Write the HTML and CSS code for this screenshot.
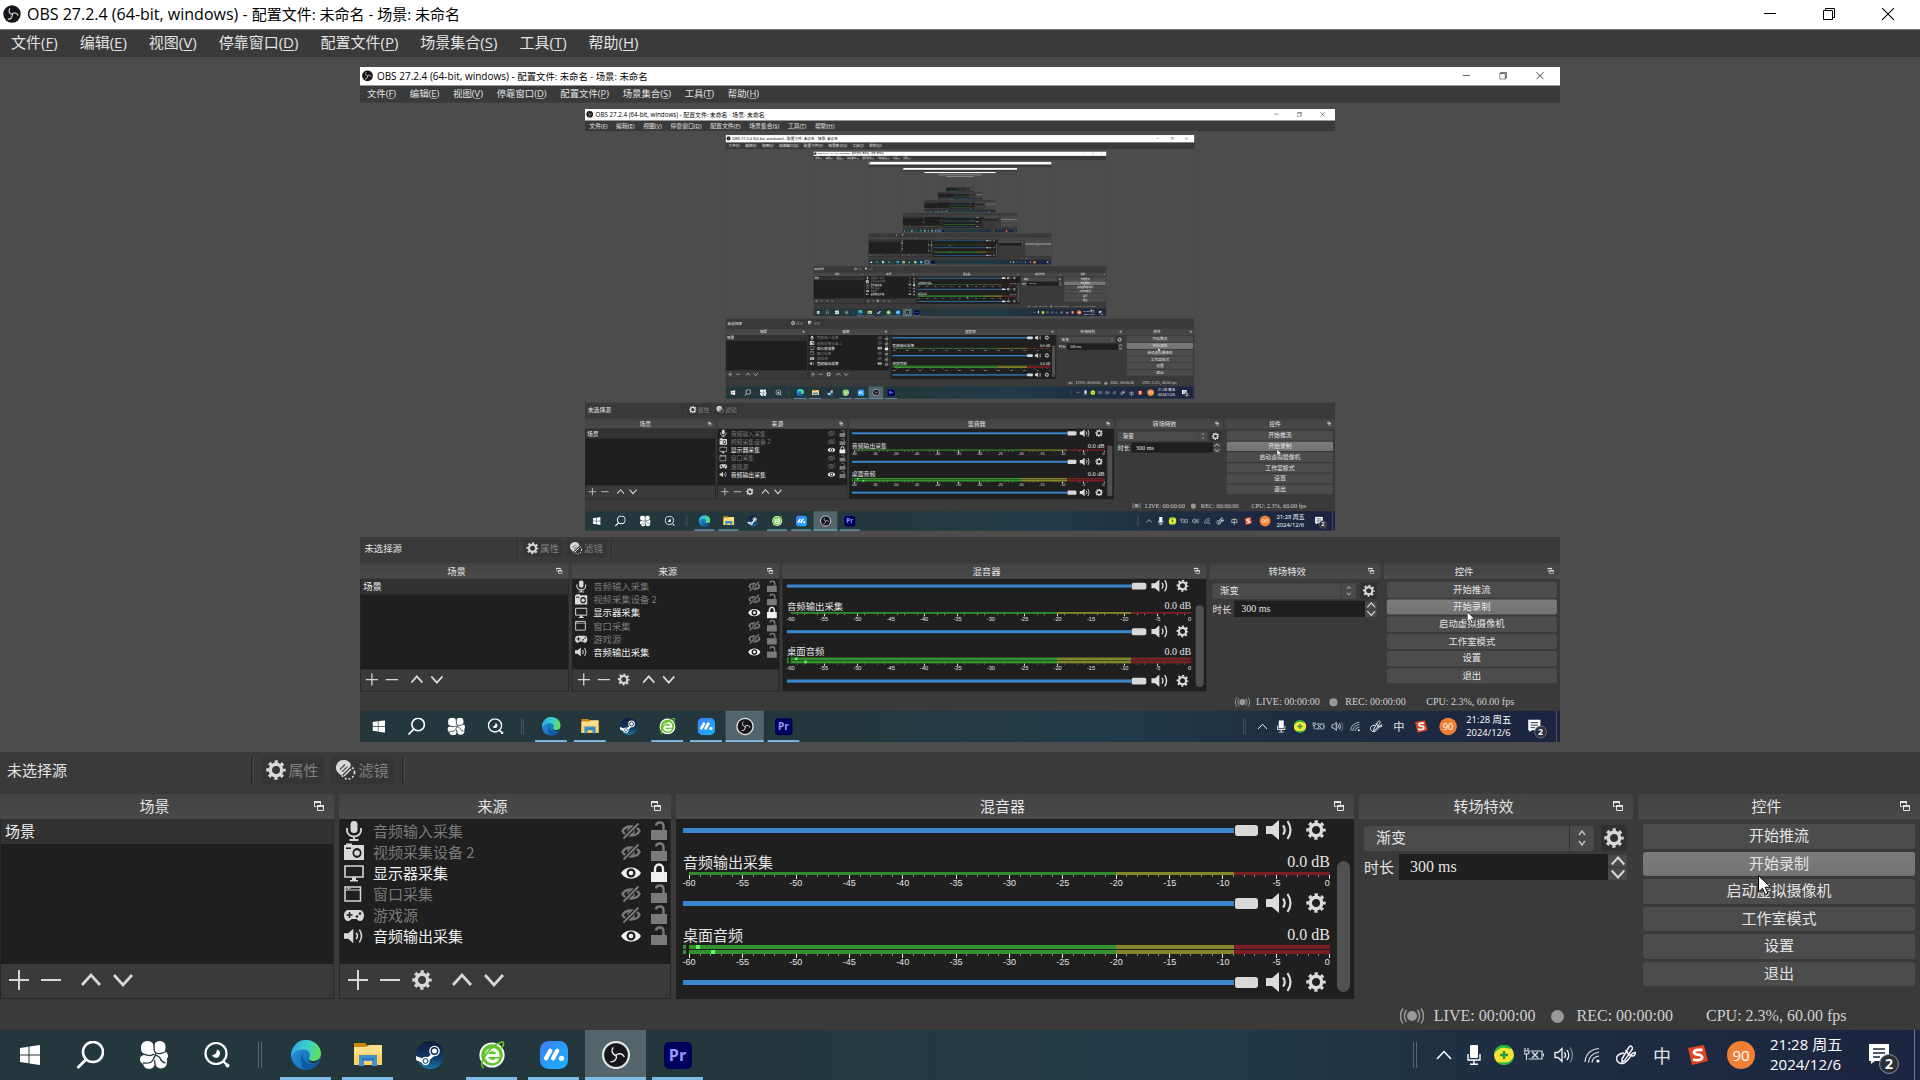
FILE: index.html
```html
<!DOCTYPE html>
<html lang="zh-CN">
<head>
<meta charset="utf-8">
<title>OBS 27.2.4 (64-bit, windows) - 配置文件: 未命名 - 场景: 未命名</title>
<link rel="stylesheet" href="styles.css">
</head>
<body>
<svg class="defs" aria-hidden="true">
  <defs>
    <linearGradient id="edge-top" x1="0" y1="0.2" x2="1" y2="0.4"><stop offset="0" stop-color="#2fa8e0"/><stop offset="0.55" stop-color="#37d0c8"/><stop offset="1" stop-color="#5fe05a"/></linearGradient>
    <linearGradient id="edge-low" x1="0" y1="0" x2="1" y2="1"><stop offset="0" stop-color="#2b9be6"/><stop offset="1" stop-color="#0f5ba8"/></linearGradient>
    <linearGradient id="steam-bg" x1="0" y1="0" x2="0" y2="1"><stop offset="0" stop-color="#101a3c"/><stop offset="0.6" stop-color="#123a63"/><stop offset="1" stop-color="#1878a8"/></linearGradient>
    <linearGradient id="m-bg" x1="0" y1="0" x2="1" y2="1"><stop offset="0" stop-color="#3d7df5"/><stop offset="1" stop-color="#19b4ff"/></linearGradient>
  </defs>
  <symbol id="i-obs" viewBox="0 0 30 30"><circle cx="15" cy="15" r="14.500" fill="#17151a"/><g fill="none" stroke="#e8e8e8" stroke-width="1.800"><path d="M15 16C10.500 14.500 8.500 9.500 11.500 5.500"/><path d="M15 16C10.500 14.500 8.500 9.500 11.500 5.500" transform="rotate(120 15 15.500)"/><path d="M15 16C10.500 14.500 8.500 9.500 11.500 5.500" transform="rotate(240 15 15.500)"/></g></symbol>
  <symbol id="i-gear" viewBox="0 0 20 20"><g fill="none" stroke="currentColor"><circle cx="10" cy="10" r="5.700" stroke-width="3.400"/><circle cx="10" cy="10" r="8.200" stroke-width="3" stroke-dasharray="3.220 3.220" stroke-dashoffset="1.610"/></g></symbol>
  <symbol id="i-filter" viewBox="0 0 20 20"><path fill="currentColor" d="M7.500 0a7.500 7.500 0 0 0-6 12l3 3L15 5A7.500 7.500 0 0 0 7.500 0Z"/><path stroke="#3a3a3a" stroke-width="1.200" d="M4 9.500l5-5M5.500 12.500l6-6"/><path stroke="currentColor" stroke-width="1.600" d="M5 15l9-9M8 16l7-7"/><circle cx="12" cy="12.500" r="6.500" fill="none" stroke="currentColor" stroke-width="1.800" stroke-dasharray="1.800 2"/></symbol>
  <symbol id="i-float" viewBox="0 0 10 10"><g fill="none" stroke="currentColor"><path d="M.5 5.500v-5h6v3M.5 5.500h2"/><path d="M3.500 4.500h6v5h-6z"/><path d="M0 1h7M3 5h7" stroke-width="2"/></g></symbol>
  <symbol id="i-plus" viewBox="0 0 20 20"><path d="M10 0v20M0 10h20" stroke="currentColor" stroke-width="2"/></symbol>
  <symbol id="i-minus" viewBox="0 0 20 20"><path d="M0 10h20" stroke="currentColor" stroke-width="2"/></symbol>
  <symbol id="i-up" viewBox="0 0 20 20"><path d="M1 15l9-10 9 10" fill="none" stroke="currentColor" stroke-width="2.800"/></symbol>
  <symbol id="i-down" viewBox="0 0 20 20"><path d="M1 5l9 10 9-10" fill="none" stroke="currentColor" stroke-width="2.800"/></symbol>
  <symbol id="i-mic" viewBox="0 0 20 20"><rect x="6.500" y="0" width="7" height="12" rx="3.500" fill="currentColor"/><path d="M3 7v2.500a7 6 0 0 0 14 0V7M10 15.500V19M5.500 19h9" fill="none" stroke="currentColor" stroke-width="1.800"/></symbol>
  <symbol id="i-camera" viewBox="0 0 20 20"><path fill="currentColor" fill-rule="evenodd" d="M1 3h1V1.500h6V3h12v15H0V3zM13 6a4.500 5 0 1 0 0 10 4.500 5 0 0 0 0-10zM2 5.500v1.500h5V5.500z"/><circle cx="13" cy="11" r="2.800" fill="currentColor"/></symbol>
  <symbol id="i-monitor" viewBox="0 0 20 20"><path d="M1 3h18v11H1z" fill="none" stroke="currentColor" stroke-width="1.600"/><path d="M8 14h4v3h2v1.500H6V17h2z" fill="currentColor"/></symbol>
  <symbol id="i-window" viewBox="0 0 20 20"><path d="M1 3h15.500v14H1z" fill="none" stroke="currentColor" stroke-width="1.500"/><path d="M1 6h15.500" stroke="currentColor"/><path d="M2.500 4.500h4" stroke="currentColor" stroke-dasharray="1 .5"/></symbol>
  <symbol id="i-game" viewBox="0 0 20 20"><path fill="currentColor" d="M5 5h10c3 0 5 2 5 5.500S18 16 16 16s-3-2-4-2H8c-1 0-2 2-4 2s-4-2-4-5.500S2 5 5 5z"/><path d="M5.500 7v6M2.500 10h6" stroke="#1f1f1f" stroke-width="1.600"/><circle cx="13" cy="11.500" r="1.300" fill="#1f1f1f"/><circle cx="16" cy="8.500" r="1.300" fill="#1f1f1f"/></symbol>
  <symbol id="i-sound" viewBox="0 0 28 20"><path fill="currentColor" d="M0 6h6l7-6v20l-7-6H0z"/><path d="M17 5.500q3.500 4.500 0 9M21.500 1q6 9 0 18" fill="none" stroke="currentColor" stroke-width="2.200"/></symbol>
  <symbol id="i-eye" viewBox="0 0 20 20"><path fill="currentColor" fill-rule="evenodd" d="M0 10C4 2.500 16 2.500 20 10 16 17.500 4 17.500 0 10zM10 5.500a4.500 4.500 0 1 0 0 9 4.500 4.500 0 0 0 0-9z"/><circle cx="10" cy="10" r="2.300" fill="currentColor"/></symbol>
  <symbol id="i-hidden" viewBox="0 0 20 20"><path fill="none" stroke="currentColor" stroke-width="2.400" d="M1.500 10c3-6 14-6 17 0-3 6-14 6-17 0z"/><circle cx="10" cy="10" r="3" fill="none" stroke="currentColor" stroke-width="1.600"/><path d="M2 18L18 2" stroke="#1f1f1f" stroke-width="4"/><path d="M2.500 17.500L17.500 2.500" stroke="currentColor" stroke-width="2"/></symbol>
  <symbol id="i-lock" viewBox="0 0 16 20"><path d="M0 9h16v10H0z" fill="currentColor"/><path d="M4 9V6a4 4.500 0 0 1 8 0v3" fill="none" stroke="currentColor" stroke-width="2.400"/></symbol>
  <symbol id="i-unlock" viewBox="0 0 16 20"><path d="M0 9h16v10H0z" fill="currentColor"/><path d="M5 4.500C5.500.500 12.500.500 12.500 5v4" fill="none" stroke="currentColor" stroke-width="2.400"/></symbol>
  <symbol id="i-live" viewBox="0 0 24 16"><circle cx="12" cy="8" r="5" fill="currentColor"/><path d="M6.500 2q-4 6 0 12M17.500 2q4 6 0 12M3 .500q-5 7.500 0 15M21 .500q5 7.500 0 15" fill="none" stroke="currentColor" stroke-width="1.500"/></symbol>
  <symbol id="i-updown" viewBox="0 0 8 16"><path d="M1 5l3-4 3 4M1 11l3 4 3-4" fill="none" stroke="currentColor" stroke-width="1.500"/></symbol>

  <symbol id="i-win" viewBox="0 0 20 20"><path fill="#fff" d="M0 3l8.500-1.200V9.500H0zM9.500 1.600L20 0v9.500H9.500zM0 10.500h8.500v7.700L0 17zM9.500 10.500H20V20L9.500 18.400z"/></symbol>
  <symbol id="i-search" viewBox="0 0 28 28"><circle cx="17" cy="11" r="10" fill="none" stroke="#fff" stroke-width="2.600"/><path d="M10 18.500L1.500 27" stroke="#fff" stroke-width="2.800"/></symbol>
  <symbol id="i-pinwheel" viewBox="0 0 28 28"><g fill="#fff"><rect x="1" y="0" width="13" height="14" rx="6"/><rect x="14" y="0" width="11.500" height="13" rx="5.500"/><rect x="15" y="10" width="13" height="10" rx="5"/><rect x="0" y="14" width="14" height="9" rx="4.500"/><rect x="3" y="15" width="12" height="13" rx="6"/><rect x="15" y="14" width="12" height="13.500" rx="6"/><circle cx="14" cy="14" r="5"/></g><path fill="none" stroke="#24373d" stroke-width="1.300" d="M14 .5v6q0 4.500 2 5.500 4 2 11-2M1 12q9 4.500 13 1M3 22q8 1 10-3t3-7M14.500 27.500q1.500-4 0-8M14.500 14q5 1 6 4t5 4"/></symbol>
  <symbol id="i-lens" viewBox="0 0 26 26"><circle cx="12" cy="11.500" r="10.500" fill="none" stroke="#fff" stroke-width="2.200"/><path d="M19 19l4 4" stroke="#fff" stroke-width="2.400"/><circle cx="23.500" cy="23.500" r="2" fill="#fff"/><path d="M13 7.500a4.200 4.200 0 1 1-5 5.500q4.500 0 5-5.500z" fill="#fff"/></symbol>
  <symbol id="i-edge" viewBox="0 0 30 30"><circle cx="15" cy="15" r="15" fill="url(#edge-low)"/><path fill="url(#edge-top)" d="M1 11C4 3 9 0 15 0c9 0 15 6.500 15 13.500 0 5-4 7.500-7.500 7.500-4 0-5.500-1.500-4-4 1.500-4-1-7.500-6-7.500C7 9.500 3 12 .2 16.500Q0 13 1 11z"/><path fill="#0c59a4" d="M10 19c0-4 2-7.500 4.500-8C10 12 10.500 22 19 24c4 .8 7-.5 8.500-1.500C25 27 20 30 15 30c-3-1-5-6-5-11z"/><path fill="#24373d" d="M18.500 17c-1.500 2.500 0 4 4 4q3.500 0 6.200-2.500-.5 3-3.200 4.500c-5 1.500-10-2-7-6z"/></symbol>
  <symbol id="i-folder" viewBox="0 0 28 26"><path fill="#c88a10" d="M0 1h11l3 3h14v6H0z"/><path fill="#ffe08a" d="M0 5h12l3-2h13v20H0z"/><path fill="#ffd35c" d="M0 12h28v11H0z"/><path fill="#3f92d2" d="M5 13h18v11h-5v-5h-8v5H5z"/><path fill="#2f78b8" d="M8 16h12v2H8z"/></symbol>
  <symbol id="i-steam" viewBox="0 0 28 28"><circle cx="14" cy="14" r="14" fill="url(#steam-bg)"/><path fill="#fff" d="M0 15l9 3.500 6-5v-4l5 4-6.500 5.500-3.500 4.500L0 19z"/><circle cx="9.500" cy="20" r="4.200" fill="#fff"/><circle cx="9.500" cy="20" r="2.400" fill="none" stroke="#123a63" stroke-width="1"/><circle cx="18.500" cy="10" r="5.300" fill="#fff"/><circle cx="18.500" cy="10" r="3.200" fill="#fff" stroke="#12284c" stroke-width="1.400"/></symbol>
  <symbol id="i-browser" viewBox="0 0 28 30"><circle cx="14" cy="15" r="13.500" fill="#fff"/><circle cx="14" cy="15" r="11.500" fill="#62c62a"/><path d="M8 15.500h12.500c0-8-12-8.500-12.500 0 0 7 9 8.500 12 3.500" fill="none" stroke="#fff" stroke-width="3.400"/><path d="M5 29C-2 24 12 5 24 1q5 0 0 7" fill="none" stroke="#5cc127" stroke-width="1.800"/></symbol>
  <symbol id="i-m" viewBox="0 0 30 30"><rect width="30" height="30" rx="9" fill="url(#m-bg)"/><path d="M6.500 18.500l4.500-8M14 18.500l4.500-8" stroke="#fff" stroke-width="4.600" stroke-linecap="round"/><circle cx="23" cy="18.500" r="2.800" fill="#fff"/></symbol>
  <symbol id="i-shield" viewBox="0 0 20 20"><circle cx="10" cy="10" r="10" fill="#f6e332"/><path d="M0 9A10 10 0 0 1 18 4q-5-1-8-1.500Q4 2.500 0 9zM20 11A10 10 0 0 1 3 17q5 .5 9 .5 5-.5 8-6.500z" fill="#23b14a"/><path d="M10 6v8M6 10h8" stroke="#2a9a3d" stroke-width="2.400"/></symbol>
  <symbol id="i-power" viewBox="0 0 20 14"><g fill="none" stroke="#d5dbe0" stroke-width="1.200"><path d="M6.500 3H18v8H4.500"/><path d="M19.500 5.500v3M1 0v2.500M4 0v2.500M0 3h5v1.500Q5 6 2.500 6 0 6 0 4.500zM2.500 6v6"/><path d="M8 4l6 6M14 4l-6 6" stroke-width="1.500"/></g></symbol>
  <symbol id="i-volume" viewBox="0 0 20 18"><g fill="none" stroke="#f2f4f5" stroke-width="1.300"><path d="M1 6.500h3l4-4v13l-4-4H1z"/><path d="M10.500 6q2 3 0 6M13 4q3.500 5 0 10"/><path d="M16 1.500q5 7.500 0 15" stroke="#7d8797"/></g></symbol>
  <symbol id="i-wifi" viewBox="0 0 16 16"><g fill="none" stroke="#dfe4ea" stroke-width="1.200"><path d="M1 15Q2 3 15 1.500M4.500 15.500Q5 7 15 5M8 15.500q.5-5.500 7-6.500"/></g><circle cx="14" cy="14" r="1.600" fill="#fff"/></symbol>
  <symbol id="i-pen" viewBox="0 0 20 20"><g fill="none" stroke="#f2f4f5" stroke-width="1.500"><path d="M6 14L13 2q2-2 3 0 1 1 0 2.500L9 15l-3 2z"/><path d="M8 8q-8 1-7.500 6.500Q3 20 8 18q5-3 7-8 2-3 4.500-2.500-.5 4-4 3.500-3-1-6-6"/></g></symbol>
  <symbol id="i-traymic" viewBox="0 0 14 20"><rect x="3" width="8" height="13" rx="1" fill="#fff"/><path d="M1 9v6h12V9M7 15v4M3 19.300h8" fill="none" stroke="#fff" stroke-width="1.400"/></symbol>
  <symbol id="i-sogou" viewBox="0 0 20 20"><path fill="#dd4422" d="M0 3l16-3 4 16-16 4z"/><path d="M14.500 5Q6 4 6 7.500q.5 2 4 2.200 5 .5 4 3.800-2 2.500-9 1" fill="none" stroke="#fff" stroke-width="2.800"/></symbol>
  <symbol id="i-chevron" viewBox="0 0 16 10"><path d="M1 9l7-7.500L15 9" fill="none" stroke="#fff" stroke-width="1.500"/></symbol>
  <symbol id="i-note" viewBox="0 0 20 20"><path fill="#fff" d="M0 0h20v17H6l-4 3v-3H0z"/><path d="M4 5h12M4 9h12M4 13h7" stroke="#1e2942" stroke-width="1.500"/></symbol>
  <symbol id="i-min" viewBox="0 0 12 12"><path d="M0 5.500h12" stroke="#000"/></symbol>
  <symbol id="i-restore" viewBox="0 0 12 12"><path d="M.5 2.500h9v9h-9zM2.500 2.500v-2h9v9h-2" fill="none" stroke="#000"/></symbol>
  <symbol id="i-close" viewBox="0 0 12 12"><path d="M0 0l12 12M12 0L0 12" stroke="#000" stroke-width="1.100"/></symbol>
  <symbol id="i-cursor" viewBox="0 0 13 21"><path d="M.5.500v16.500l4-3.800 2.600 6.300 2.800-1.200-2.700-6.100h5.300z" fill="#fff" stroke="#000"/></symbol>
</svg>

<div class="desktop" id="desktop">
  <header class="titlebar">
    <svg class="titlebar-logo"><use href="#i-obs"/></svg>
    <span class="titlebar-text"><span class="app-name">OBS 27.2.4 (64-bit, windows) - </span>配置文件: 未命名 - 场景: 未命名</span>
    <div class="window-buttons">
      <button aria-label="最小化"><svg><use href="#i-min"/></svg></button>
      <button aria-label="还原"><svg><use href="#i-restore"/></svg></button>
      <button aria-label="关闭"><svg><use href="#i-close"/></svg></button>
    </div>
  </header>

  <nav class="menubar">
    <button>文件(<u>F</u>)</button><button>编辑(<u>E</u>)</button><button>视图(<u>V</u>)</button><button>停靠窗口(<u>D</u>)</button><button>配置文件(<u>P</u>)</button><button>场景集合(<u>S</u>)</button><button>工具(<u>T</u>)</button><button>帮助(<u>H</u>)</button>
  </nav>

  <main class="preview"><div class="capture"></div></main>

  <div class="source-toolbar">
    <span class="source-toolbar-name">未选择源</span>
    <i class="divider"></i>
    <button><svg><use href="#i-gear"/></svg>属性</button>
    <button><svg><use href="#i-filter"/></svg>滤镜</button>
    <i class="divider"></i>
  </div>

  <div class="docks">
    <section class="dock">
      <h2>场景<button class="float" aria-label="浮动"><svg><use href="#i-float"/></svg></button></h2>
      <div class="list-box">
        <ul class="scene-list"><li>场景</li></ul>
        <div class="list-tools">
          <button aria-label="添加"><svg><use href="#i-plus"/></svg></button>
          <button aria-label="移除"><svg><use href="#i-minus"/></svg></button>
          <button class="apart" aria-label="上移"><svg><use href="#i-up"/></svg></button>
          <button aria-label="下移"><svg><use href="#i-down"/></svg></button>
        </div>
      </div>
    </section>

    <section class="dock">
      <h2>来源<button class="float" aria-label="浮动"><svg><use href="#i-float"/></svg></button></h2>
      <div class="list-box">
        <ul class="source-list">
          <li class="off"><svg><use href="#i-mic"/></svg><span>音频输入采集</span><button aria-label="可见"><svg><use href="#i-hidden"/></svg></button><button aria-label="锁定"><svg class="lock"><use href="#i-unlock"/></svg></button></li>
          <li class="off"><svg><use href="#i-camera"/></svg><span>视频采集设备 2</span><button aria-label="可见"><svg><use href="#i-hidden"/></svg></button><button aria-label="锁定"><svg class="lock"><use href="#i-unlock"/></svg></button></li>
          <li><svg><use href="#i-monitor"/></svg><span>显示器采集</span><button aria-label="可见"><svg><use href="#i-eye"/></svg></button><button aria-label="锁定"><svg class="lock"><use href="#i-lock"/></svg></button></li>
          <li class="off"><svg><use href="#i-window"/></svg><span>窗口采集</span><button aria-label="可见"><svg><use href="#i-hidden"/></svg></button><button aria-label="锁定"><svg class="lock"><use href="#i-unlock"/></svg></button></li>
          <li class="off"><svg><use href="#i-game"/></svg><span>游戏源</span><button aria-label="可见"><svg><use href="#i-hidden"/></svg></button><button aria-label="锁定"><svg class="lock"><use href="#i-unlock"/></svg></button></li>
          <li><svg><use href="#i-sound"/></svg><span>音频输出采集</span><button aria-label="可见"><svg><use href="#i-eye"/></svg></button><button class="dim" aria-label="锁定"><svg class="lock"><use href="#i-unlock"/></svg></button></li>
        </ul>
        <div class="list-tools">
          <button aria-label="添加"><svg><use href="#i-plus"/></svg></button>
          <button aria-label="移除"><svg><use href="#i-minus"/></svg></button>
          <button aria-label="属性"><svg><use href="#i-gear"/></svg></button>
          <button class="apart" aria-label="上移"><svg><use href="#i-up"/></svg></button>
          <button aria-label="下移"><svg><use href="#i-down"/></svg></button>
        </div>
      </div>
    </section>

    <section class="dock">
      <h2>混音器<button class="float" aria-label="浮动"><svg><use href="#i-float"/></svg></button></h2>
      <div class="mixer">
        <div class="channels">
          <div class="volume"><input type="range" aria-label="音量" value="100"><button aria-label="静音"><svg class="speaker"><use href="#i-sound"/></svg></button><button aria-label="设置"><svg><use href="#i-gear"/></svg></button></div>
          <div class="channel-name"><span>音频输出采集</span><span class="num">0.0 dB</span></div>
          <div class="meter"><div class="bar"></div></div>
          <div class="ticks"></div>
          <div class="scale"><span>-60</span><span>-55</span><span>-50</span><span>-45</span><span>-40</span><span>-35</span><span>-30</span><span>-25</span><span>-20</span><span>-15</span><span>-10</span><span>-5</span><span>0</span></div>
          <div class="volume"><input type="range" aria-label="音量" value="100"><button aria-label="静音"><svg class="speaker"><use href="#i-sound"/></svg></button><button aria-label="设置"><svg><use href="#i-gear"/></svg></button></div>
          <div class="channel-name"><span>桌面音频</span><span class="num">0.0 dB</span></div>
          <div class="meter stereo"><div class="bar"></div><div class="bar right"></div></div>
          <div class="ticks"></div>
          <div class="scale"><span>-60</span><span>-55</span><span>-50</span><span>-45</span><span>-40</span><span>-35</span><span>-30</span><span>-25</span><span>-20</span><span>-15</span><span>-10</span><span>-5</span><span>0</span></div>
          <div class="volume"><input type="range" aria-label="音量" value="100"><button aria-label="静音"><svg class="speaker"><use href="#i-sound"/></svg></button><button aria-label="设置"><svg><use href="#i-gear"/></svg></button></div>
        </div>
        <div class="scrollbar"></div>
      </div>
    </section>

    <section class="dock">
      <h2>转场特效<button class="float" aria-label="浮动"><svg><use href="#i-float"/></svg></button></h2>
      <div class="transition">
        <div class="transition-row">
          <div class="combo"><select aria-label="转场特效"><option>渐变</option></select><svg><use href="#i-updown"/></svg></div>
          <button class="gear-button" aria-label="转场属性"><svg><use href="#i-gear"/></svg></button>
        </div>
        <div class="transition-row">
          <label class="duration">时长<input class="num" type="text" value="300 ms"></label>
          <div class="spin"><button aria-label="增加"><svg><use href="#i-up"/></svg></button><button aria-label="减少"><svg><use href="#i-down"/></svg></button></div>
        </div>
      </div>
    </section>

    <section class="dock controls-dock">
      <h2>控件<button class="float" aria-label="浮动"><svg><use href="#i-float"/></svg></button></h2>
      <div class="controls">
        <button>开始推流</button><button class="hover">开始录制</button><button>启动虚拟摄像机</button><button>工作室模式</button><button>设置</button><button>退出</button>
      </div>
      <svg class="cursor"><use href="#i-cursor"/></svg>
    </section>
  </div>

  <footer class="statusbar num">
    <svg class="live"><use href="#i-live"/></svg><span>LIVE: 00:00:00</span>
    <i class="rec-dot"></i><span>REC: 00:00:00</span>
    <span class="cpu">CPU: 2.3%, 60.00 fps</span>
  </footer>

  <div class="taskbar">
    <div class="launchers">
      <button class="start" aria-label="开始"><svg><use href="#i-win"/></svg></button>
      <button class="tool" aria-label="搜索"><svg><use href="#i-search"/></svg></button>
      <button class="tool" aria-label="应用"><svg><use href="#i-pinwheel"/></svg></button>
      <button class="tool" aria-label="查找"><svg><use href="#i-lens"/></svg></button>
    </div>
    <i class="grip"></i>
    <div class="apps">
      <button class="running" aria-label="Edge"><svg><use href="#i-edge"/></svg></button>
      <button class="running" aria-label="文件资源管理器"><svg><use href="#i-folder"/></svg></button>
      <button aria-label="Steam"><svg><use href="#i-steam"/></svg></button>
      <button class="running" aria-label="浏览器"><svg><use href="#i-browser"/></svg></button>
      <button class="running" aria-label="M"><svg><use href="#i-m"/></svg></button>
      <button class="running active" aria-label="OBS"><svg class="ring"><use href="#i-obs"/></svg></button>
      <button class="running" aria-label="Premiere"><span class="pr">Pr</span></button>
    </div>
    <div class="tray">
      <i class="grip"></i>
      <svg class="t-chevron"><use href="#i-chevron"/></svg>
      <svg class="t-mic"><use href="#i-traymic"/></svg>
      <svg class="t-icon"><use href="#i-shield"/></svg>
      <svg class="t-icon"><use href="#i-power"/></svg>
      <svg class="t-icon"><use href="#i-volume"/></svg>
      <svg class="t-icon t-wifi"><use href="#i-wifi"/></svg>
      <svg class="t-icon"><use href="#i-pen"/></svg>
      <span class="ime">中</span>
      <svg class="t-icon"><use href="#i-sogou"/></svg>
      <span class="score">90</span>
      <div class="clock"><span>21:28 周五</span><span>2024/12/6</span></div>
      <button class="notes" aria-label="通知"><svg><use href="#i-note"/></svg><b>2</b></button>
      <i class="peek"></i>
    </div>
  </div>
</div>
<script src="script.js"></script>
</body>
</html>
```
FILE: styles.css
```css
* { box-sizing: border-box; }
body, h2, ul { margin: 0; padding: 0; }
ul { list-style: none; }
body {
  background: #3a3a3a;
  color: #e4e4e4;
  font: 15px/20px "Noto Sans CJK SC", sans-serif;
  overflow: hidden;
}
button {
  margin: 0; padding: 0; border: 0; background: none;
  color: inherit; font: inherit;
  display: flex; align-items: center; justify-content: center;
}
svg { display: block; flex: none; width: 20px; height: 20px; overflow: visible; }
.defs { position: absolute; width: 0; height: 0; }
.num { font-family: "Liberation Serif", serif; font-size: 16px; }

.desktop {
  display: flex; flex-direction: column;
  width: 100%; height: 100vh;
  background: #3a3a3a;
}

/* window frame */
.titlebar {
  display: flex; align-items: center; flex: none;
  height: 30px; padding: 0 3px 1px;
  background: #fff; color: #000;
  border-bottom: 1px solid #777;
  font-family: "Open Sans", "Noto Sans CJK SC", sans-serif;
}
.titlebar-logo { width: 18px; height: 18px; margin-right: 6px; }
.titlebar-text { flex: 1; }
.app-name { font-size: 16px; }
.window-buttons { display: flex; }
.window-buttons button { width: 59px; height: 28px; }
.window-buttons svg { width: 12px; height: 12px; }
.menubar {
  display: flex; flex: none; height: 27px; padding-bottom: 3px;
  font-family: "Open Sans", "Noto Sans CJK SC", sans-serif;
}
.menubar button { padding: 0 11px; }
.menubar u { text-underline-offset: 2px; }

/* preview canvas */
.preview {
  flex: 1; min-height: 0;
  display: flex; align-items: center; justify-content: center;
  background: #4c4c4c; overflow: hidden;
}
.capture {
  flex: none; overflow: hidden;
  width: calc(var(--screen-w) * var(--capture-scale));
  height: calc(var(--screen-h) * var(--capture-scale));
}
.capture > .desktop {
  width: var(--screen-w); height: var(--screen-h);
  transform: scale(var(--capture-scale));
  transform-origin: 0 0;
}

/* source toolbar */
.source-toolbar { display: flex; align-items: center; flex: none; height: 42px; padding: 0 7px 6px; }
.source-toolbar-name { width: 244px; }
.source-toolbar .divider { width: 3px; height: 27px; border: 1px solid #262626; border-right-color: #484848; }
.source-toolbar button {
  width: 63px; height: 27px; margin-left: 7px; gap: 2px;
  background: #353535; border-radius: 3px; color: #808080;
}
.source-toolbar button svg { color: #d8d8d8; }
.source-toolbar button + .divider { margin-left: 8px; }

/* docks */
.docks {
  display: grid; flex: none;
  grid-template-columns: 334fr 332fr 678fr 274fr 282fr;
  gap: 5px; height: 205px;
}
.dock { display: flex; flex-direction: column; min-width: 0; }
.dock h2 {
  display: grid; grid-template-columns: 1fr 10px; gap: 5px; align-items: center; flex: none;
  height: 25px; padding: 0 10px 2px 0;
  background: linear-gradient(#434343, #494949);
  font-size: 15px; font-weight: 400; line-height: 20px; text-align: center;
}
.float svg { width: 10px; height: 10px; }

.list-box { flex: 1; display: flex; flex-direction: column; background: #1f1f1f; border: 1px solid #282828; border-top: 0; }
.scene-list, .source-list { flex: 1; }
.scene-list li { height: 25px; padding: 2px 4px; background: #323232; color: #f0f0f0; }
.source-list { display: grid; grid-auto-rows: 21px; padding: 1px 3px 0 4px; }
.source-list li { display: flex; align-items: center; color: #f0f0f0; }
.source-list li > svg { color: #d8d8d8; }
.source-list span { flex: 1; margin-left: 9px; }
.source-list .off, .source-list .dim { color: #7a7a7a; }
.source-list button + button { margin-left: 10px; }
.source-list .lock { width: 16px; }
.list-tools { display: flex; align-items: center; height: 34px; padding: 0 0 2px 8px; gap: 12px; background: #3a3a3a; color: #d8d8d8; }
.list-tools .apart { margin-left: 8px; }

/* mixer */
.mixer { flex: 1; display: flex; background: #1f1f1f; padding: 0 4px 0 7px; }
.channels { flex: 1; min-width: 0; padding-top: 1px; }
.volume { display: flex; align-items: center; height: 20px; padding-right: 4px; color: #dcdcdc; }
.volume input {
  flex: 1; min-width: 0; margin: 0; height: 12px;
  appearance: none; background: none;
}
.volume input::-webkit-slider-runnable-track { height: 5px; background: #3a85cc; }
.volume input::-webkit-slider-thumb {
  appearance: none; width: 24px; height: 11px; margin-top: -3px;
  background: #d8d8d8; border-left: 1px solid #1f1f1f; border-radius: 3px;
}
.volume button { margin-left: 12px; }
.volume input + button { margin-left: 8px; }
.volume .speaker { width: 28px; }
.channel-name { display: flex; justify-content: space-between; height: 20px; margin-top: 12px; }
.meter { margin-left: 6px; }
.bar {
  height: 3px;
  background: linear-gradient(90deg, #2f8a2b 66.600%, #85852c 66.600% 85%, #7a1d24 85%);
}
.stereo { display: grid; gap: 1px; }
.stereo .bar {
  height: 4px;
  background:
    linear-gradient(#5cff5c, #5cff5c) 7px 0 / 4px 4px no-repeat,
    linear-gradient(90deg, #34912f 66.600%, #85852c 66.600% 85%, #7a1d24 85%);
  box-shadow: -3px 0 #1f1f1f, -6px 0 #34912f;
}
.stereo .right { background-position: 22px 0, 0 0; }
.ticks {
  height: 4px; margin-left: 6px;
  background:
    repeating-linear-gradient(90deg, #e4e4e4 0 1px, transparent 1px calc((100% - 1px) / 12)) 0 0 / 100% 4px no-repeat,
    repeating-linear-gradient(90deg, #8a8a8a 0 1px, transparent 1px calc((100% - 1px) / 60)) 0 0 / 100% 2px no-repeat;
}
.scale { display: flex; justify-content: space-between; height: 14px; margin-left: 6px; font: 9px/8px "Liberation Sans", sans-serif; }
.scale span { width: 0; display: flex; justify-content: center; }
.scale span:last-child { justify-content: flex-end; }
.scrollbar { width: 13px; height: 131px; margin: 42px 0 0 7px; border-radius: 7px; background: #505050; }

/* transitions */
.transition { padding: 6px 6px 0 5px; display: grid; gap: 3px; }
.transition-row { display: flex; align-items: center; height: 26px; }
.combo {
  flex: 1; display: flex; align-items: center; height: 25px; padding-right: 8px;
  background: #4a4a4a; border-radius: 3px;
}
.combo select {
  flex: 1; height: 25px; padding: 0 12px 2px; margin-right: 8px;
  appearance: none; border: 0; border-right: 1px solid #343434; background: none;
  color: inherit; font: inherit;
}
.combo svg { width: 8px; height: 16px; color: #c0c0c0; }
.gear-button { width: 26px; height: 26px; margin-left: 7px; background: #303030; border-radius: 3px; color: #d8d8d8; }
.duration { flex: 1; display: flex; align-items: center; gap: 5px; }
.duration input { flex: 1; min-width: 0; height: 26px; padding: 0 11px; border: 0; background: #1f1f1f; color: inherit; }
.spin { display: grid; gap: 1px; width: 19px; }
.spin button { height: 12px; background: #4a4a4a; border-radius: 2px; color: #d8d8d8; }
.spin svg { width: 14px; height: 14px; }

/* controls */
.controls-dock { position: relative; }
.controls { display: grid; gap: 3px; height: 167px; padding: 5px 5px 0; }
.controls button { background: #4c4c4c; border-radius: 3px; min-height: 0; padding-bottom: 2px; line-height: 18px; }
.controls .hover { background: linear-gradient(#7c7c7c, #727272); }
.cursor { position: absolute; left: 120px; top: 81px; width: 13px; height: 21px; }
/* the captured pointer trails the live one */
.capture .cursor { left: 133px; top: 77px; }

/* status bar */
.statusbar { display: flex; align-items: center; justify-content: flex-end; flex: none; height: 31px; padding: 3px 64px 0 0; color: #d0d0d0; }
.statusbar .live { width: 24px; height: 16px; margin-right: 10px; color: #999; }
.rec-dot { width: 13px; height: 13px; margin: 0 13px 0 15px; border-radius: 50%; background: #999; }
.statusbar .cpu { margin-left: 33px; width: 150px; }

/* taskbar */
.taskbar {
  display: flex; align-items: center; flex: none; height: 50px;
  background: linear-gradient(90deg, #24373d, #24373d 40%, #203a48 62%, #1f2f42 76%, #1c2440);
}
.launchers { display: flex; align-items: center; padding-left: 20px; }
.launchers .tool { margin-left: 36px; }
.launchers .tool svg { width: 28px; height: 28px; }
.launchers .tool:last-child svg { width: 26px; height: 26px; }
.grip { width: 4px; height: 26px; border: solid #56666d; border-width: 0 1px; margin-left: 28px; }
.apps { display: flex; gap: 1px; height: 50px; margin-left: 13px; }
.apps button { width: 61px; border-bottom: 3px solid transparent; padding-top: 3px; }
.apps button svg { width: 28px; height: 28px; }
.apps button:first-child svg { width: 30px; height: 30px; }
.apps .running { background: linear-gradient(#7dbbe8, #7dbbe8) center bottom / 51px 3px no-repeat; background-origin: border-box; }
.apps .active { background-size: 61px 3px; background-color: #53656a; }
.ring { border: 2px solid #e8e8e8; border-radius: 50%; }
.pr {
  width: 28px; height: 27px; border-radius: 5px;
  background: #00005b; color: #9999ff;
  font: 700 16px/26px "Open Sans", sans-serif;
}
.tray { display: flex; align-items: center; height: 50px; margin-left: auto; }
.tray .grip { margin: 0 19px 0 0; }
.t-chevron { width: 16px; height: 10px; margin-right: 15px; }
.t-mic { width: 14px; margin-right: 13px; }
.t-icon { margin-right: 10px; }
.t-wifi { width: 16px; height: 16px; margin-right: 16px; }
.ime { font-size: 18px; margin-right: 17px; margin-left: 7px; }
.score {
  width: 28px; height: 28px; margin: 0 15px 0 9px; border-radius: 50%;
  background: #ee7f35; color: #fff; text-align: center; font: 15px/28px "Open Sans", sans-serif;
}
.clock { display: flex; flex-direction: column; width: 78px; padding-bottom: 2px; color: #fff; font-family: "Open Sans", "Noto Sans CJK SC", sans-serif; }
.notes { position: relative; margin: 0 25px 2px 21px; }
.notes b {
  position: absolute; left: 10px; top: 10px; width: 20px; height: 20px;
  border: 1px solid #8a8f9c; border-radius: 50%; background: #2c3038;
  color: #fff; font: 700 14px/18px "Open Sans", sans-serif;
}
.peek { width: 6px; height: 50px; border-left: 1px solid #6d7588; }
```
FILE: script.js
```js
// The display source captures this very desktop, so each capture holds a smaller one.
const LEVELS = 9;
// Past this level the type is about a pixel tall, so the copies leave it out.
const TEXT_LEVELS = 4;
const MARGIN = 20;

const desktop = document.getElementById('desktop');
const template = desktop.cloneNode(true);
template.removeAttribute('id');
template.inert = true;

function stripText(node) {
  for (const child of [...node.childNodes]) {
    if (child.nodeType === Node.TEXT_NODE) child.remove();
    else stripText(child);
  }
  for (const field of node.querySelectorAll('input[type="text"]')) field.setAttribute('value', '');
}

function buildCapture(level) {
  const copy = template.cloneNode(true);
  if (level > TEXT_LEVELS) stripText(copy);
  if (level < LEVELS) copy.querySelector('.capture').append(buildCapture(level + 1));
  return copy;
}

function fitCapture() {
  const preview = desktop.querySelector('.preview');
  const root = document.documentElement.style;
  root.setProperty('--screen-w', innerWidth + 'px');
  root.setProperty('--screen-h', innerHeight + 'px');
  root.setProperty('--capture-scale', (preview.clientHeight - MARGIN) / innerHeight);
}

fitCapture();
desktop.querySelector('.capture').append(buildCapture(1));
addEventListener('resize', fitCapture);
```
